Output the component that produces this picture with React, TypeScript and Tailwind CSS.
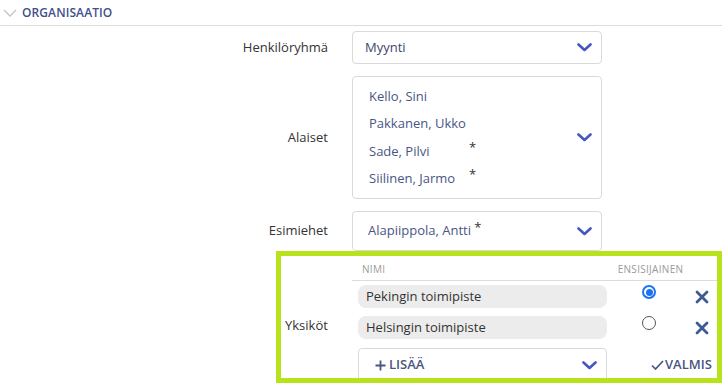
import React from "react";

const font = { fontFamily: '"Open Sans", "Noto Sans", sans-serif' };

function Chevron() {
  return (
    <svg width="15" height="9" viewBox="0 0 15 9" className="shrink-0">
      <path d="M1.5 1.5 L7.5 7 L13.5 1.5" fill="none" stroke="#4457c2" strokeWidth="2.6" strokeLinecap="round" strokeLinejoin="round" />
    </svg>
  );
}

function Cross() {
  return (
    <svg width="14" height="14" viewBox="0 0 14 14">
      <path d="M2 2 L12 12 M12 2 L2 12" stroke="#3d5a94" strokeWidth="2.8" strokeLinecap="round" />
    </svg>
  );
}

function Row({ label, children, boxClass }: { label: string; children: React.ReactNode; boxClass: string }) {
  return (
    <div className="flex items-center">
      <div className="w-[328px] text-right text-[13px] text-[#333]">{label}</div>
      <div className={"ml-[24px] w-[250px] rounded border border-[#d9d9d9] bg-white " + boxClass}>{children}</div>
    </div>
  );
}

const names = [
  { n: "Kello, Sini", star: false },
  { n: "Pakkanen, Ukko", star: false },
  { n: "Sade, Pilvi", star: true },
  { n: "Siilinen, Jarmo", star: true },
];

export default function App() {
  return (
    <div className="w-[722px] h-[384px] overflow-hidden bg-white" style={font}>
      <div className="h-[26px] flex items-center border-b border-[#dcdcdc]">
        <svg width="14" height="8" viewBox="0 0 14 8" className="ml-[3px]">
          <path d="M1 1 L7 7 L13 1" fill="none" stroke="#c4c4c4" strokeWidth="1.3" />
        </svg>
        <span className="ml-[5px] text-[12px] font-semibold tracking-[0.1px] text-[#3f4f8c]">ORGANISAATIO</span>
      </div>

      <div className="mt-[5px] flex flex-col gap-[12px]">
        <Row label="Henkilöryhmä" boxClass="h-[33px] flex items-center justify-between pl-[12px] pr-[9px]">
          <span className="text-[13px] text-[#3d4670]">Myynti</span>
          <Chevron />
        </Row>

        <Row label="Alaiset" boxClass="h-[123px] flex items-center justify-between pl-[16px] pr-[9px]">
          <div className="flex flex-col gap-[8.5px] text-[13px] text-[#4a5585]">
            {names.map((x) => (
              <div key={x.n} className="relative h-[19px] leading-[19px] w-[120px]">
                {x.n}
                {x.star && <span className="absolute left-[100px] top-[-4px] text-[#333]">*</span>}
              </div>
            ))}
          </div>
          <Chevron />
        </Row>

        <Row label="Esimiehet" boxClass="h-[40px] flex items-center justify-between pl-[15px] pr-[9px]">
          <span className="text-[13px] text-[#4a5585]">
            Alapiippola, Antti <span className="relative top-[-3px] text-[#333]">*</span>
          </span>
          <Chevron />
        </Row>
      </div>

      <div className="ml-[276px] mt-0 h-[132px] border-[5px] border-[#b7e21c] flex overflow-hidden">
        <div className="w-[71px] pl-[4px] pt-[60px] text-[13px] text-[#333]">Yksiköt</div>
        <div className="flex-1">
          <div className="h-[25px] border-b border-[#dcdcdc] grid grid-cols-[255px_83px_27px] items-end pb-[3px] text-[10px] text-[#9a9a9a] tracking-[0.3px]">
            <span className="pl-[10px]">NIMI</span>
            <span className="text-center pl-[4px]">ENSISIJAINEN</span>
            <span />
          </div>
          <div className="mt-[4px] flex flex-col gap-[8px]">
            {[
              { n: "Pekingin toimipiste", on: true },
              { n: "Helsingin toimipiste", on: false },
            ].map((r) => (
              <div key={r.n} className="grid grid-cols-[255px_83px_27px] items-center">
                <div className="ml-[6px] h-[23px] rounded-[8px] bg-[#ececec] flex items-center pl-[8px] text-[13px] text-[#333]">
                  {r.n}
                </div>
                <div className="flex justify-center pb-[9px] pl-[1px]">
                  {r.on ? (
                    <span className="w-[14px] h-[14px] rounded-full border-[2px] border-[#1a73f0] flex items-center justify-center">
                      <span className="w-[7px] h-[7px] rounded-full bg-[#1a73f0]" />
                    </span>
                  ) : (
                    <span className="w-[14px] h-[14px] rounded-full border border-[#555]" />
                  )}
                </div>
                <div className="flex justify-center pr-[4px]">
                  <Cross />
                </div>
              </div>
            ))}
            <div className="grid grid-cols-[255px_110px] items-center mt-[1px]">
              <div className="ml-[6px] h-[34px] rounded border border-[#d9d9d9] flex items-center justify-between pl-[16px] pr-[9px]">
                <span className="flex items-center gap-[3px] text-[13px] font-semibold text-[#4a5580]">
                  <svg width="11" height="11" viewBox="0 0 11 11">
                    <path d="M5.5 0.5 V10.5 M0.5 5.5 H10.5" stroke="#4a5580" strokeWidth="1.8" />
                  </svg>
                  LISÄÄ
                </span>
                <Chevron />
              </div>
              <div className="flex items-center pl-[44px] text-[13px] font-semibold text-[#4a5580]">
                <svg width="13" height="10" viewBox="0 0 13 10" className="mr-[1px]">
                  <path d="M1 5.5 L4.5 9 L12 1" fill="none" stroke="#4a5580" strokeWidth="1.7" />
                </svg>
                VALMIS
              </div>
            </div>
          </div>
        </div>
      </div>
    </div>
  );
}
